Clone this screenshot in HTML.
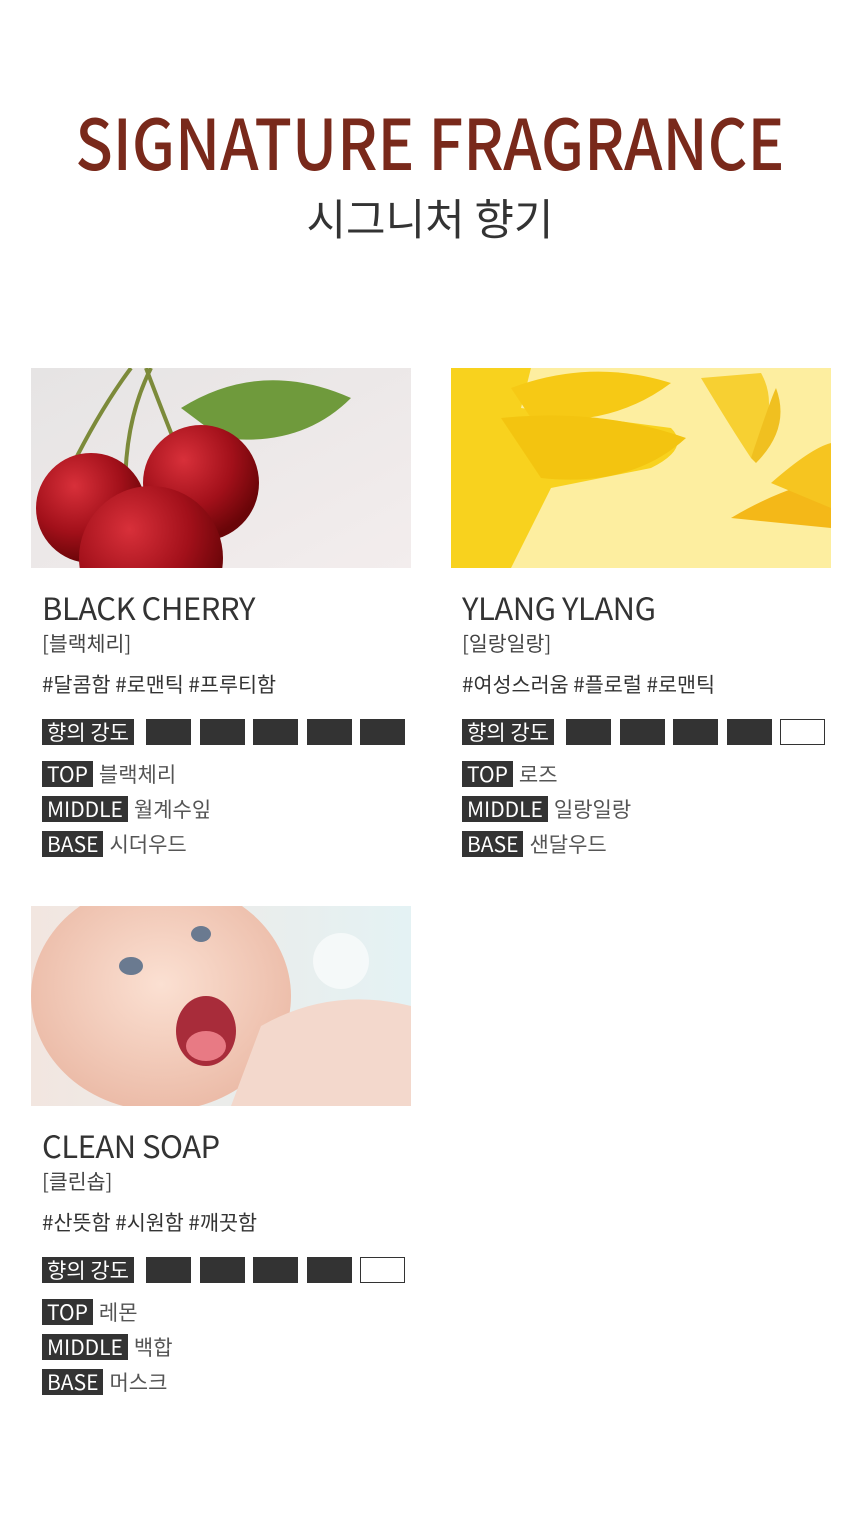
<!DOCTYPE html>
<html><head><meta charset="utf-8"><style>
*{margin:0;padding:0;box-sizing:border-box}
body{width:860px;height:1515px;background:#fff;position:relative;font-family:"Liberation Sans","Noto Sans CJK KR",sans-serif;color:#333;overflow:hidden}
.h1{position:absolute;left:0;width:860px;top:101px;text-align:center;color:#79291b;font-family:"Noto Sans CJK KR",sans-serif;font-size:70px;line-height:80px;font-weight:500;white-space:nowrap}
.h1 span{display:inline-block;transform:scaleX(0.88);transform-origin:center}
.h2{position:absolute;left:0;width:860px;top:189px;text-align:center;font-family:"Noto Sans CJK KR",sans-serif;font-size:43px;line-height:56px;color:#333}
.card{position:absolute;width:380px;height:500px}
.img{position:absolute;left:0;top:0;width:380px;height:200px;overflow:hidden}
.t{position:absolute;left:11px;top:219px;font-family:"Noto Sans CJK KR",sans-serif;font-size:31px;line-height:40px;color:#333;letter-spacing:-0.5px}
.k{position:absolute;left:11px;top:259px;font-family:"Noto Sans CJK KR",sans-serif;font-size:20.5px;line-height:30px;color:#444}
.tag{position:absolute;left:11px;top:300px;font-family:"Noto Sans CJK KR",sans-serif;font-size:20.7px;line-height:30px;color:#333}
.row{position:absolute;left:11px;height:26px;display:flex;align-items:center;font-family:"Noto Sans CJK KR",sans-serif;font-size:21px;color:#555}
.lab{background:#333;color:#fff;height:26px;line-height:26px;padding:0 5px;margin-right:6px;font-size:21px}
.sq{position:absolute;top:351px;width:45px;height:26px;background:#333}
.sq.e{background:#fff;border:1px solid #333}
</style></head><body>
<div class="h1"><span>SIGNATURE FRAGRANCE</span></div>
<div class="h2">시그니처 향기</div>

<div class="card" style="left:31px;top:368px">
 <div class="img"><svg width="380" height="200"><defs><linearGradient id="g1" x1="0" y1="0" x2="1" y2="1"><stop offset="0" stop-color="#e6e4e4"/><stop offset="1" stop-color="#f3eded"/></linearGradient><radialGradient id="c1" cx="0.35" cy="0.3" r="0.7"><stop offset="0" stop-color="#d8303a"/><stop offset="0.6" stop-color="#a2101a"/><stop offset="1" stop-color="#6a0508"/></radialGradient></defs>
 <rect width="380" height="200" fill="url(#g1)"/>
 <path d="M150 40 Q230 -10 320 30 Q270 80 190 70 Z" fill="#6f9a3c"/>
 <path d="M40 100 Q70 40 100 0 M95 140 Q90 60 120 0 M150 90 Q130 40 115 0" stroke="#7c8a3a" stroke-width="4" fill="none"/>
 <circle cx="60" cy="140" r="55" fill="url(#c1)"/>
 <circle cx="170" cy="115" r="58" fill="url(#c1)"/>
 <circle cx="120" cy="190" r="72" fill="url(#c1)"/>
 </svg></div>
 <div class="t">BLACK CHERRY</div><div class="k">[블랙체리]</div><div class="tag">#달콤함 #로맨틱 #프루티함</div>
 <div class="row" style="top:351px"><span class="lab">향의 강도</span></div>
 <div class="sq" style="left:115px"></div><div class="sq" style="left:169px"></div><div class="sq" style="left:222px"></div><div class="sq" style="left:276px"></div><div class="sq" style="left:329px"></div>
 <div class="row" style="top:393px"><span class="lab">TOP</span>블랙체리</div>
 <div class="row" style="top:428px"><span class="lab">MIDDLE</span>월계수잎</div>
 <div class="row" style="top:463px"><span class="lab">BASE</span>시더우드</div>
</div>

<div class="card" style="left:451px;top:368px">
 <div class="img"><svg width="380" height="200"><rect width="380" height="200" fill="#fdeea0"/>
 <path d="M0 0 H80 L70 40 L220 60 Q240 80 200 100 L100 120 L60 200 H0 Z" fill="#f8d21e"/>
 <path d="M60 20 Q140 -10 220 15 Q160 60 80 50 Z" fill="#f6c915"/>
 <path d="M50 50 Q150 40 235 70 Q180 120 90 110 Z" fill="#f3c410"/>
 <path d="M250 10 Q280 60 300 90 Q330 40 310 5 Z" fill="#f7d032"/>
 <path d="M300 90 Q320 30 325 20 Q340 60 305 95Z" fill="#f0c020"/>
 <path d="M280 150 Q330 120 380 110 V160 Q330 155 280 150Z" fill="#f4b818"/>
 <path d="M320 115 Q360 80 380 75 V140Z" fill="#f6c520"/>
 </svg></div>
 <div class="t">YLANG YLANG</div><div class="k">[일랑일랑]</div><div class="tag">#여성스러움 #플로럴 #로맨틱</div>
 <div class="row" style="top:351px"><span class="lab">향의 강도</span></div>
 <div class="sq" style="left:115px"></div><div class="sq" style="left:169px"></div><div class="sq" style="left:222px"></div><div class="sq" style="left:276px"></div><div class="sq e" style="left:329px"></div>
 <div class="row" style="top:393px"><span class="lab">TOP</span>로즈</div>
 <div class="row" style="top:428px"><span class="lab">MIDDLE</span>일랑일랑</div>
 <div class="row" style="top:463px"><span class="lab">BASE</span>샌달우드</div>
</div>

<div class="card" style="left:31px;top:906px">
 <div class="img"><svg width="380" height="200"><defs><linearGradient id="b" x1="0" y1="0" x2="1" y2="0"><stop offset="0" stop-color="#f2e6e0"/><stop offset="1" stop-color="#e4f2f4"/></linearGradient><radialGradient id="s" cx="0.5" cy="0.45" r="0.6"><stop offset="0" stop-color="#fbe0d2"/><stop offset="1" stop-color="#eab8a4"/></radialGradient></defs>
 <rect width="380" height="200" fill="url(#b)"/>
 <ellipse cx="130" cy="90" rx="130" ry="115" fill="url(#s)"/>
 <path d="M230 120 Q300 80 380 100 V200 H200Z" fill="#f3d8cc"/>
 <ellipse cx="175" cy="125" rx="30" ry="35" fill="#a82c3a"/>
 <ellipse cx="175" cy="140" rx="20" ry="15" fill="#e87a84"/>
 <ellipse cx="100" cy="60" rx="12" ry="9" fill="#6a7a90"/><ellipse cx="170" cy="28" rx="10" ry="8" fill="#6a7a90"/>
 <circle cx="310" cy="55" r="28" fill="#ffffff" opacity="0.6"/>
 </svg></div>
 <div class="t">CLEAN SOAP</div><div class="k">[클린솝]</div><div class="tag">#산뜻함 #시원함 #깨끗함</div>
 <div class="row" style="top:351px"><span class="lab">향의 강도</span></div>
 <div class="sq" style="left:115px"></div><div class="sq" style="left:169px"></div><div class="sq" style="left:222px"></div><div class="sq" style="left:276px"></div><div class="sq e" style="left:329px"></div>
 <div class="row" style="top:393px"><span class="lab">TOP</span>레몬</div>
 <div class="row" style="top:428px"><span class="lab">MIDDLE</span>백합</div>
 <div class="row" style="top:463px"><span class="lab">BASE</span>머스크</div>
</div>
</body></html>
